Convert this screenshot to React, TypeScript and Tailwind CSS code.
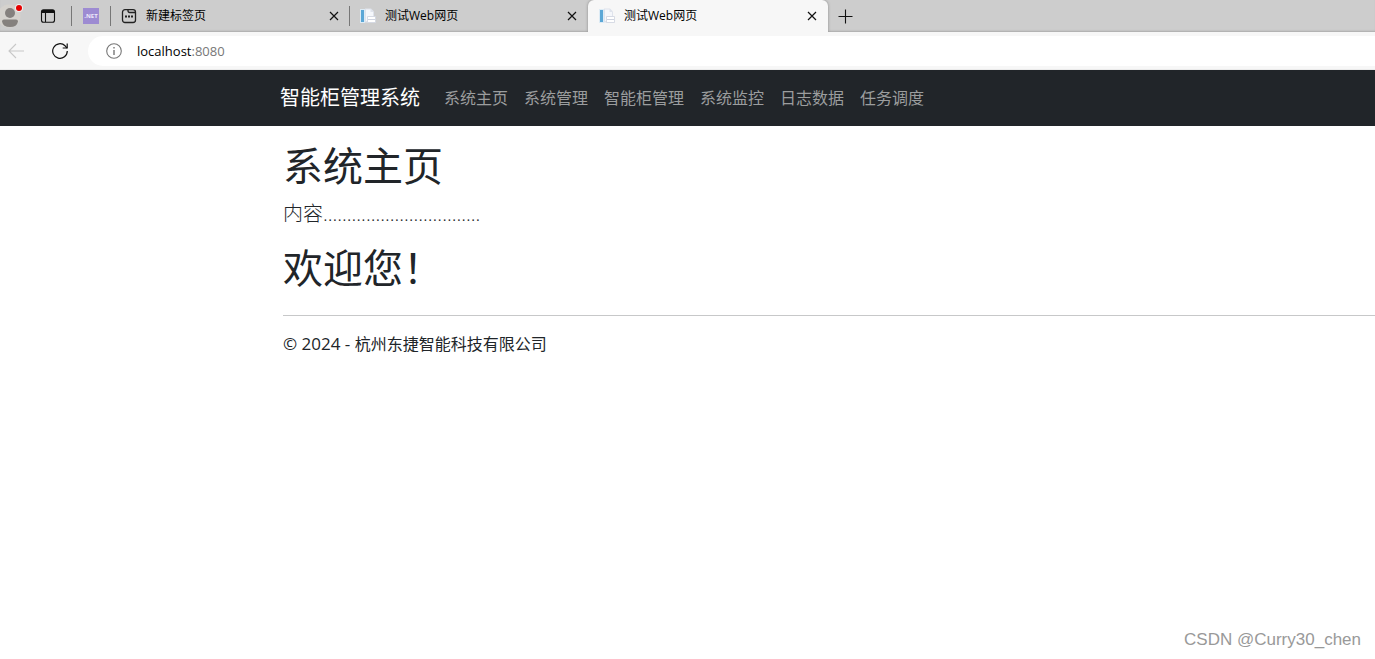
import type { ReactNode } from "react";

const menu = ["系统主页", "系统管理", "智能柜管理", "系统监控", "日志数据", "任务调度"];

function CloseIcon() {
  return (
    <svg width="10" height="10" viewBox="0 0 10 10" fill="none" stroke="#111" strokeWidth="1.2">
      <path d="M1 1l8 8M9 1l-8 8" />
    </svg>
  );
}

function NewPageIcon() {
  return (
    <svg width="16" height="16" viewBox="0 0 16 16" fill="none" stroke="#222" strokeWidth="1.3">
      <rect x="1.5" y="1.7" width="13" height="12.8" rx="2.5" />
      <path d="M7 1.7v1.1q0 1.7 1.7 1.7h5.8" />
      <path d="M4 8.5h2M7 8.5h2M10 8.5h2" strokeWidth="1.8" />
    </svg>
  );
}

function DocumentIcon() {
  return (
    <svg width="16" height="16" viewBox="0 0 16 16">
      <rect x="0" y="1" width="5" height="14" fill="#dcebf5" />
      <rect x="1" y="2" width="3" height="12" fill="#5ba7d6" />
      <path d="M5 .5h6l3 3v11H5z" fill="#dfe3ec" />
      <path d="M6 1.5h4.5v2.5h2.5v4H8v5H6z" fill="#f5f7fb" />
      <path d="M7.5 8.5h8v6h-8z" fill="#fff" stroke="#cfd4e0" strokeWidth=".8" />
      <path d="M8 11.5h7" stroke="#cfd4e0" />
    </svg>
  );
}

function Tab({ title, icon, active = false, divider = false }: { title: string; icon: ReactNode; active?: boolean; divider?: boolean }) {
  return (
    <div
      className={
        active
          ? "flex h-8 w-60 items-center rounded-t-md bg-[#f7f7f7] pr-2 pl-[11px] shadow-[0_0_3px_#888]"
          : divider
            ? "flex h-8 w-[239px] items-center pl-2.5"
            : "flex h-8 w-[238px] items-center pr-2 pl-2.5"
      }
    >
      {icon}
      <button type="button" className="ml-[9px] flex-1 text-left text-[12px] leading-4 text-black">{title}</button>
      <button type="button" aria-label="关闭标签页" className="flex size-4 items-center justify-center"><CloseIcon /></button>
      {divider && <span className="ml-[7px] h-5 w-px bg-[#777]" />}
    </div>
  );
}

function BrowserBar() {
  return (
    <header className="bg-[#f7f7f7]">
      <div className="flex h-8 items-center overflow-hidden bg-[#cdcdcd] shadow-[inset_0_-2px_2px_-1px_#aaa]">
        <button type="button" aria-label="用户" className="w-6">
          <svg width="24" height="32" viewBox="0 0 24 32">
            <circle cx="9" cy="16" r="11.5" fill="#d5d2cd" />
            <circle cx="10" cy="13" r="5" fill="#85817e" />
            <path d="M2 21.5q0-2 2-2h12q2 0 2 2-1 5.5-8 5.5t-8-5.5" fill="#85817e" />
            <circle cx="19" cy="8" r="4" fill="#eee" />
            <circle cx="19" cy="8" r="3" fill="#e60000" />
          </svg>
        </button>
        <button type="button" aria-label="标签页操作" className="ml-4">
          <svg width="16" height="16" viewBox="0 0 16 16" fill="none" stroke="#111" strokeWidth="1.1">
            <rect x="1.5" y="1.7" width="13" height="12.6" rx="2" />
            <path d="M5.5 5v9" />
            <path d="M2 3.5h12" strokeWidth="3" />
          </svg>
        </button>
        <span className="ml-[15px] h-5 w-px bg-[#777]" />
        <button type="button" className="ml-[11px] size-4 bg-[#9d8bd2] text-center text-[6px] leading-4 font-bold text-[#ede8fa]">.NET</button>
        <span className="ml-[11px] h-5 w-px bg-[#777]" />
        <Tab title="新建标签页" icon={<NewPageIcon />} divider />
        <Tab title="测试Web网页" icon={<DocumentIcon />} />
        <Tab title="测试Web网页" icon={<DocumentIcon />} active />
        <button type="button" aria-label="新建标签页" className="ml-2.5">
          <svg width="15" height="15" viewBox="0 0 15 15" stroke="#111" strokeWidth="1.1"><path d="M7.5 .5v14M.5 7.5h14" /></svg>
        </button>
      </div>
      <div className="flex h-[38px] items-center border-b border-[#ebebeb] pl-2">
        <button type="button" aria-label="后退">
          <svg width="16" height="16" viewBox="0 0 16 16" fill="none" stroke="#c8c8c8" strokeWidth="1.1"><path d="M16 8H1M8 1L1 8l7 7" /></svg>
        </button>
        <button type="button" aria-label="刷新" className="ml-7">
          <svg width="16" height="16" viewBox="0 0 16 16" fill="none" stroke="#111" strokeWidth="1.2">
            <path d="M15.3 8a7.3 7.3 0 1 1-2.2-5.2L15 5" />
            <path d="M15.2.5V5h-4.5" />
          </svg>
        </button>
        <div className="ml-5 flex h-[30px] flex-1 items-center rounded-l-full bg-white pl-[18px]">
          <svg width="16" height="16" viewBox="0 0 16 16" fill="none" stroke="#777" strokeWidth="1.1">
            <circle cx="8" cy="8" r="7.3" />
            <path d="M8 7v5M8 4v1.4" strokeWidth="1.4" />
          </svg>
          <a href="#home" className="ml-[15px] text-[13px] leading-5 text-black">
            localhost<span className="text-[#777]">:8080</span>
          </a>
        </div>
      </div>
    </header>
  );
}

export default function App() {
  return (
    <div className="flex min-h-screen flex-col bg-white font-['Open_Sans','Noto_Sans_CJK_SC',sans-serif] text-[#212529]">
      <BrowserBar />
      <nav className="flex h-14 items-center bg-[#212529] pl-70">
        <a href="#home" className="text-[20px] leading-[30px] text-white">智能柜管理系统</a>
        <ul className="ml-4 flex">
          {menu.map((item) => (
            <li key={item}>
              <a href="#home" className="px-2 text-[16px] leading-6 text-[#9b9d9e]">{item}</a>
            </li>
          ))}
        </ul>
      </nav>
      <main className="flex-1 pt-4 pl-[283px]">
        <h1 className="text-[40px] leading-12">系统主页</h1>
        <p className="mt-2 text-[20px] leading-8 font-light">内容.................................</p>
        <h1 className="mt-3.5 text-[40px] leading-12">欢迎您！</h1>
        <hr className="mt-[23px] border-[#c7c8c9]" />
        <footer className="mt-4 text-[16px] leading-6">
          <span className="text-[17px]">© 2024 - </span>杭州东捷智能科技有限公司
        </footer>
      </main>
      <aside className="px-[14px] pb-[7px] text-right font-['Liberation_Sans',sans-serif] text-[17px] leading-6 text-[#999]">CSDN @Curry30_chen</aside>
    </div>
  );
}
